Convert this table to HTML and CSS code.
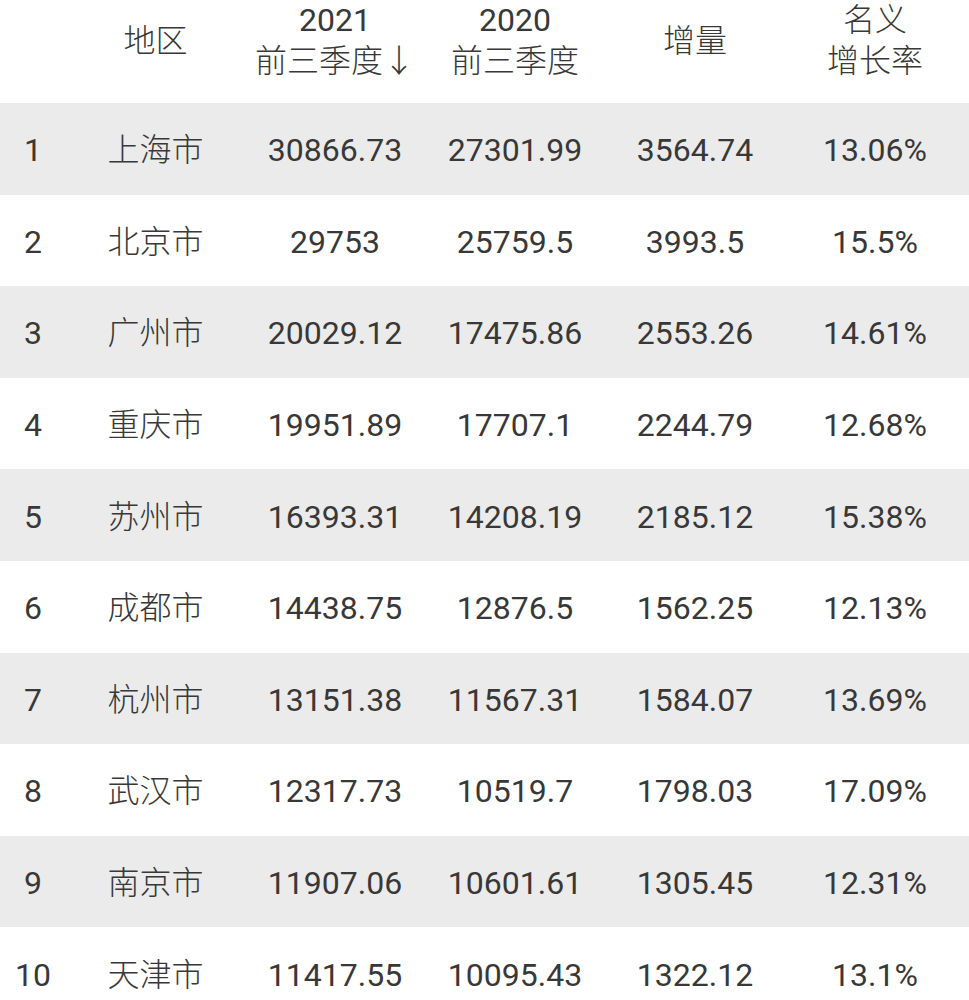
FILE: index.html
```html
<!DOCTYPE html>
<html lang="zh-CN">
<head>
<meta charset="utf-8">
<title>2021前三季度GDP</title>
<link rel="stylesheet" href="styles.css">
</head>
<body>
<div class="table">
  <div class="row head">
    <div class="cell"></div>
    <div class="cell cjk">地区</div>
    <div class="cell"><span>2021</span><span class="cjk">前三季度↓</span></div>
    <div class="cell"><span>2020</span><span class="cjk">前三季度</span></div>
    <div class="cell cjk">增量</div>
    <div class="cell cjk"><span>名义</span><span>增长率</span></div>
  </div>
  <div class="row odd"><div class="cell">1</div><div class="cell cjk">上海市</div><div class="cell">30866.73</div><div class="cell">27301.99</div><div class="cell">3564.74</div><div class="cell">13.06%</div></div>
  <div class="row"><div class="cell">2</div><div class="cell cjk">北京市</div><div class="cell">29753</div><div class="cell">25759.5</div><div class="cell">3993.5</div><div class="cell">15.5%</div></div>
  <div class="row odd"><div class="cell">3</div><div class="cell cjk">广州市</div><div class="cell">20029.12</div><div class="cell">17475.86</div><div class="cell">2553.26</div><div class="cell">14.61%</div></div>
  <div class="row"><div class="cell">4</div><div class="cell cjk">重庆市</div><div class="cell">19951.89</div><div class="cell">17707.1</div><div class="cell">2244.79</div><div class="cell">12.68%</div></div>
  <div class="row odd"><div class="cell">5</div><div class="cell cjk">苏州市</div><div class="cell">16393.31</div><div class="cell">14208.19</div><div class="cell">2185.12</div><div class="cell">15.38%</div></div>
  <div class="row"><div class="cell">6</div><div class="cell cjk">成都市</div><div class="cell">14438.75</div><div class="cell">12876.5</div><div class="cell">1562.25</div><div class="cell">12.13%</div></div>
  <div class="row odd"><div class="cell">7</div><div class="cell cjk">杭州市</div><div class="cell">13151.38</div><div class="cell">11567.31</div><div class="cell">1584.07</div><div class="cell">13.69%</div></div>
  <div class="row"><div class="cell">8</div><div class="cell cjk">武汉市</div><div class="cell">12317.73</div><div class="cell">10519.7</div><div class="cell">1798.03</div><div class="cell">17.09%</div></div>
  <div class="row odd"><div class="cell">9</div><div class="cell cjk">南京市</div><div class="cell">11907.06</div><div class="cell">10601.61</div><div class="cell">1305.45</div><div class="cell">12.31%</div></div>
  <div class="row"><div class="cell">10</div><div class="cell cjk">天津市</div><div class="cell">11417.55</div><div class="cell">10095.43</div><div class="cell">1322.12</div><div class="cell">13.1%</div></div>
</div>
</body>
</html>
```
FILE: styles.css
```css
html, body {
  margin: 0;
  padding: 0;
  background: #ffffff;
}
body {
  font-family: Roboto, "Noto Sans CJK SC", sans-serif;
  font-size: 32px;
  color: #383838;
  overflow: hidden;
}
.table {
  width: 969px;
  display: flex;
  flex-direction: column;
}
.row {
  display: grid;
  grid-template-columns: 66px 179px 180px 180px 180px 180px;
  height: 91.6px;
}
.row.odd {
  background: #ebebeb;
}
.cell {
  display: flex;
  flex-direction: column;
  align-items: center;
  justify-content: center;
  line-height: 40px;
  white-space: nowrap;
  padding-top: 3px;
}
.cjk {
  font-weight: 300;
}
.row.head {
  height: 103px;
}
.row.head .cell {
  padding-top: 0;
  padding-bottom: 30px;
  line-height: 41px;
}
```
